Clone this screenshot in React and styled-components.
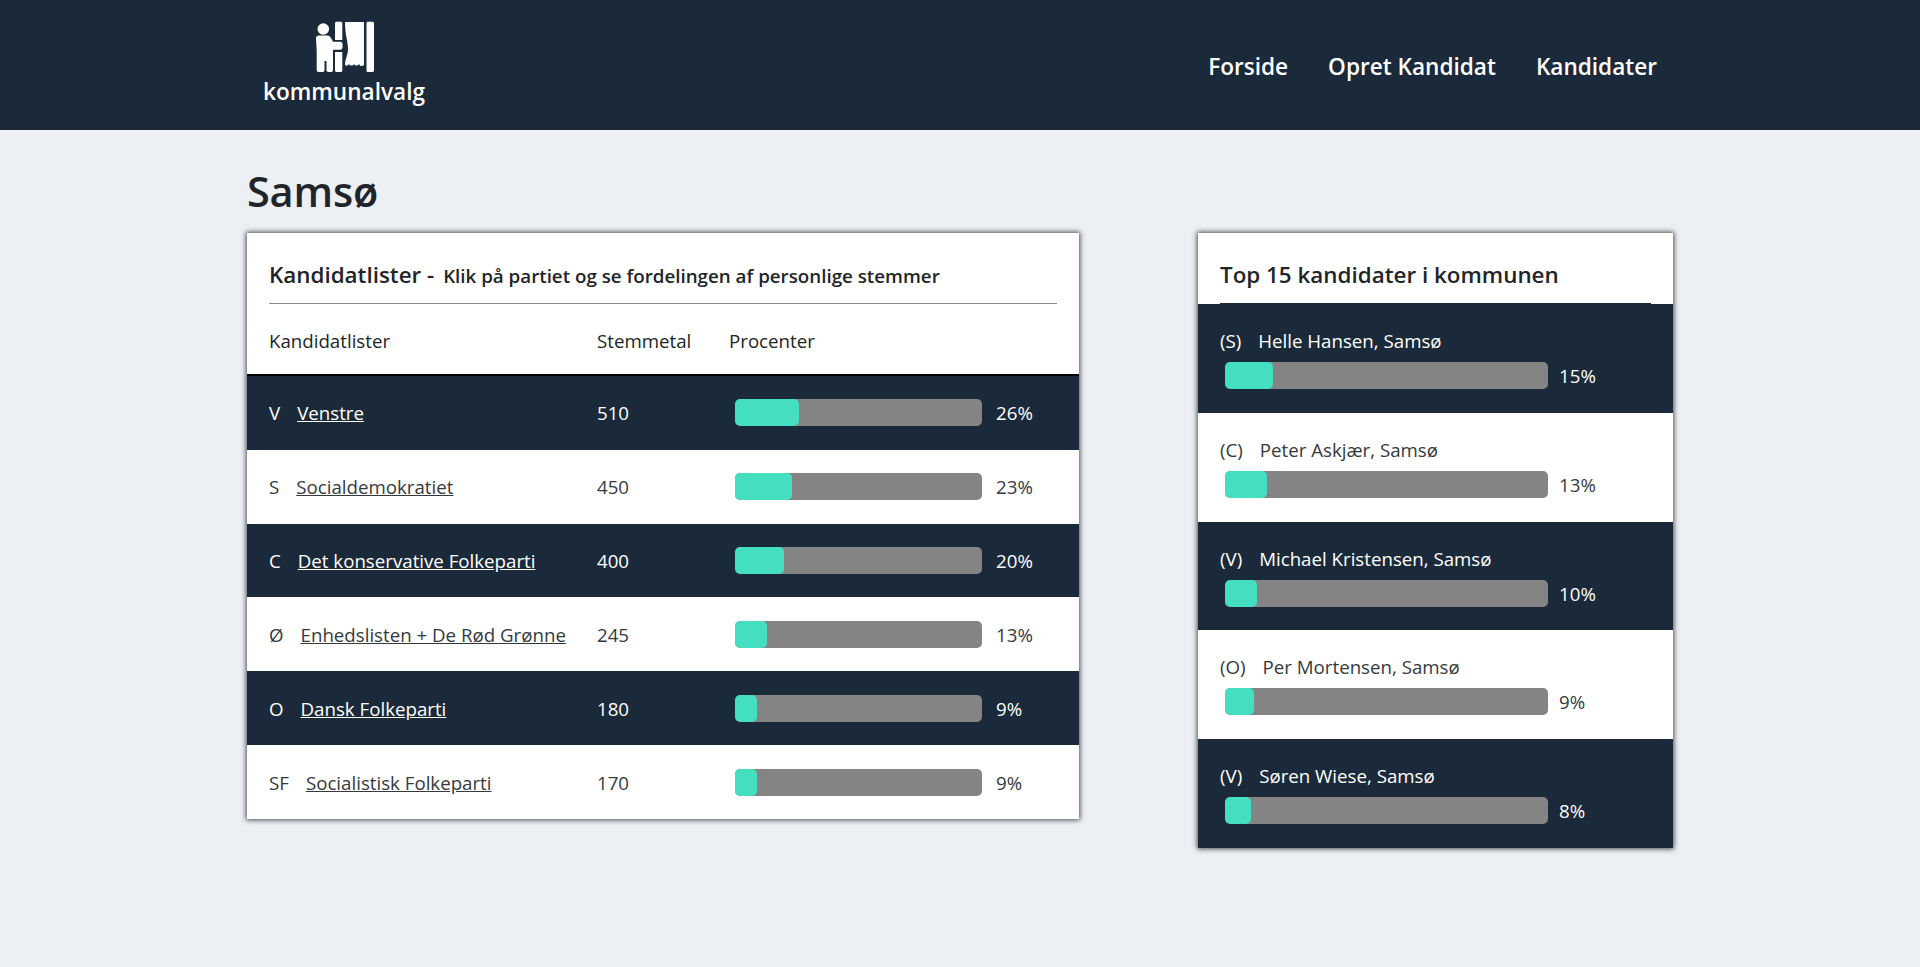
import React from 'react'
import styled, { createGlobalStyle } from 'styled-components'

const parties = [
  { code: 'V', name: 'Venstre', votes: 510, pct: 26 },
  { code: 'S', name: 'Socialdemokratiet', votes: 450, pct: 23 },
  { code: 'C', name: 'Det konservative Folkeparti', votes: 400, pct: 20 },
  { code: 'Ø', name: 'Enhedslisten + De Rød Grønne', votes: 245, pct: 13 },
  { code: 'O', name: 'Dansk Folkeparti', votes: 180, pct: 9 },
  { code: 'SF', name: 'Socialistisk Folkeparti', votes: 170, pct: 9 },
]

const candidates = [
  { code: '(S)', name: 'Helle Hansen, Samsø', pct: 15 },
  { code: '(C)', name: 'Peter Askjær, Samsø', pct: 13 },
  { code: '(V)', name: 'Michael Kristensen, Samsø', pct: 10 },
  { code: '(O)', name: 'Per Mortensen, Samsø', pct: 9 },
  { code: '(V)', name: 'Søren Wiese, Samsø', pct: 8 },
]

function VoteIcon() {
  return (
    <LogoMark width="58" height="51" viewBox="0 0 58 51" fill="#fff">
      <circle cx="7.300" cy="8" r="5.800" />
      <path d="M3 14.500h8c2 0 3 .8 4 2.500l2 3.700h7.500c1.200 0 2 1 2 2.200v3.600c0 1.200-.8 2.200-2 2.200H17V49c0 1-.7 2-1.700 2h-3c-1 0-1.800-1-1.800-2V40H8.500v9c0 1-.7 2-1.700 2H2.500C1.500 51 .7 50 .7 49V30L0 17c0-1.500 1.300-2.500 3-2.500z" />
      <path d="M20.500 .7h4.300c.9 0 1.500.7 1.500 1.500V19h-7.300V2.200c0-.8.6-1.500 1.500-1.500z" />
      <path d="M19 31h7.300v18.500c0 .8-.6 1.500-1.500 1.500h-4.300c-.9 0-1.500-.7-1.500-1.500z" />
      <path d="M29 1h19v43c-2 2-4 1-5-1-1 2-4 2-5 0-1 2-4 2-5 0-1 2-3 2-4 1 0-6 3-10 3-16 0-8-3-14-3-27z" />
      <path d="M52 .7h4.500c.9 0 1.500.7 1.500 1.500v47.300c0 .8-.6 1.500-1.500 1.500H52c-.9 0-1.500-.7-1.500-1.500V2.200c0-.8.6-1.500 1.500-1.500z" />
    </LogoMark>
  )
}

function Meter({ pct, width }) {
  return (
    <Track $width={width}>
      <Fill style={{ width: pct + '%' }} />
    </Track>
  )
}

export default function App() {
  return (
    <>
      <GlobalStyle />
      <Header>
        <Logo>
          <VoteIcon />
          <LogoText>kommunalvalg</LogoText>
        </Logo>
        <Nav>
          <NavLink href="#">Forside</NavLink>
          <NavLink href="#">Opret Kandidat</NavLink>
          <NavLink href="#">Kandidater</NavLink>
        </Nav>
      </Header>
      <Main>
        <PageTitle>Samsø</PageTitle>
        <Columns>
          <LeftCard>
            <CardHead>
              <CardTitle>
                Kandidatlister - <small>Klik på partiet og se fordelingen af personlige stemmer</small>
              </CardTitle>
            </CardHead>
            <TableHead>
              <span>Kandidatlister</span>
              <span>Stemmetal</span>
              <span>Procenter</span>
            </TableHead>
            {parties.map((p, i) => (
              <PartyRow key={p.code} $dark={i % 2 === 0}>
                <PartyName>
                  <span>{p.code}</span>
                  <PartyLink href="#">{p.name}</PartyLink>
                </PartyName>
                <span>{p.votes}</span>
                <BarCell>
                  <Meter pct={p.pct} width={247} />
                  <span>{p.pct}%</span>
                </BarCell>
              </PartyRow>
            ))}
          </LeftCard>
          <RightCard>
            <CardHead $flush>
              <CardTitle>Top 15 kandidater i kommunen</CardTitle>
            </CardHead>
            {candidates.map((c, i) => (
              <CandidateRow key={c.name} $dark={i % 2 === 0}>
                <CandidateName>
                  <span>{c.code}</span>
                  <span>{c.name}</span>
                </CandidateName>
                <CandidateBar>
                  <Meter pct={c.pct} width={323} />
                  <span>{c.pct}%</span>
                </CandidateBar>
              </CandidateRow>
            ))}
          </RightCard>
        </Columns>
      </Main>
    </>
  )
}

const GlobalStyle = createGlobalStyle`
  html, body {
    margin: 0;
    min-height: 100%;
    background: #ecf0f5;
  }
  body {
    font-family: "Open Sans", "Noto Sans", sans-serif;
    color: #212529;
    font-size: 18.700px;
  }
  * { box-sizing: border-box; }
`

const Header = styled.header`
  height: 130px;
  background: #1b2a3a;
  display: flex;
  align-items: flex-start;
  justify-content: space-between;
  padding: 21px 247px 0 263px;
`

const Logo = styled.div`
  display: flex;
  flex-direction: column;
  align-items: center;
  gap: 5px;
`

const LogoMark = styled.svg`
  margin-left: 2px;
`

const LogoText = styled.div`
  color: #fff;
  font-size: 22.600px;
  font-weight: 600;
  line-height: 30px;
`

const Nav = styled.nav`
  display: flex;
  gap: 40px;
  padding: 31px 16px 0 0;
`

const NavLink = styled.a`
  color: #fff;
  font-size: 22.600px;
  font-weight: 600;
  line-height: 30px;
  text-decoration: none;
`

const Main = styled.main`
  padding: 0 247px;
  height: 837px;
`

const PageTitle = styled.h1`
  margin: 0;
  padding-top: 31px;
  height: 103px;
  font-size: 41.500px;
  font-weight: 600;
  line-height: 60px;
  letter-spacing: -0.200px;
`

const Columns = styled.div`
  display: flex;
  align-items: flex-start;
  gap: 119px;
`

const Card = styled.section`
  background: #fff;
  box-shadow: 0 0 5px 1px rgba(0, 0, 0, 0.7);
`

const LeftCard = styled(Card)`
  width: 832px;
`

const RightCard = styled(Card)`
  width: 475px;
`

const CardHead = styled.div`
  height: 71px;
  margin: 0 22px;
  padding-top: 27px;
  border-bottom: 1px solid ${(p) => (p.$flush ? '#1b2a3a' : '#8a8a8a')};
`

const CardTitle = styled.h2`
  margin: 0;
  font-size: 22.400px;
  font-weight: 600;
  line-height: 30px;

  small {
    font-size: 18.750px;
    margin-left: 3px;
  }
`

const rowGrid = `
  display: grid;
  grid-template-columns: 328px 132px 1fr;
  align-items: center;
  padding-left: 22px;
`

const TableHead = styled.div`
  ${rowGrid}
  height: 72px;
  padding-top: 3px;
  border-bottom: 2px solid #000;
`

const PartyRow = styled.div`
  ${rowGrid}
  height: 73.830px;
  background: ${(p) => (p.$dark ? '#1b2a3a' : '#fff')};
  color: ${(p) => (p.$dark ? '#fff' : '#343a40')};
`

const PartyName = styled.div`
  display: flex;
  gap: 17px;
`

const PartyLink = styled.a`
  color: inherit;
  text-decoration: underline;
`

const BarCell = styled.div`
  display: flex;
  align-items: center;
  gap: 14px;
  padding-left: 6px;
`

const Track = styled.div`
  width: ${(p) => p.$width}px;
  height: 27px;
  background: #848484;
  border-radius: 5px;
  overflow: hidden;
`

const Fill = styled.div`
  height: 100%;
  background: #44dfc0;
  border-radius: 5px;
`

const CandidateRow = styled.div`
  height: 108.800px;
  padding: 24px 22px 0;
  background: ${(p) => (p.$dark ? '#1b2a3a' : '#fff')};
  color: ${(p) => (p.$dark ? '#fff' : '#343a40')};
`

const CandidateName = styled.div`
  display: flex;
  gap: 17px;
  line-height: 26px;
`

const CandidateBar = styled.div`
  display: flex;
  align-items: center;
  gap: 11px;
  margin: 8px 0 0 5px;
`
